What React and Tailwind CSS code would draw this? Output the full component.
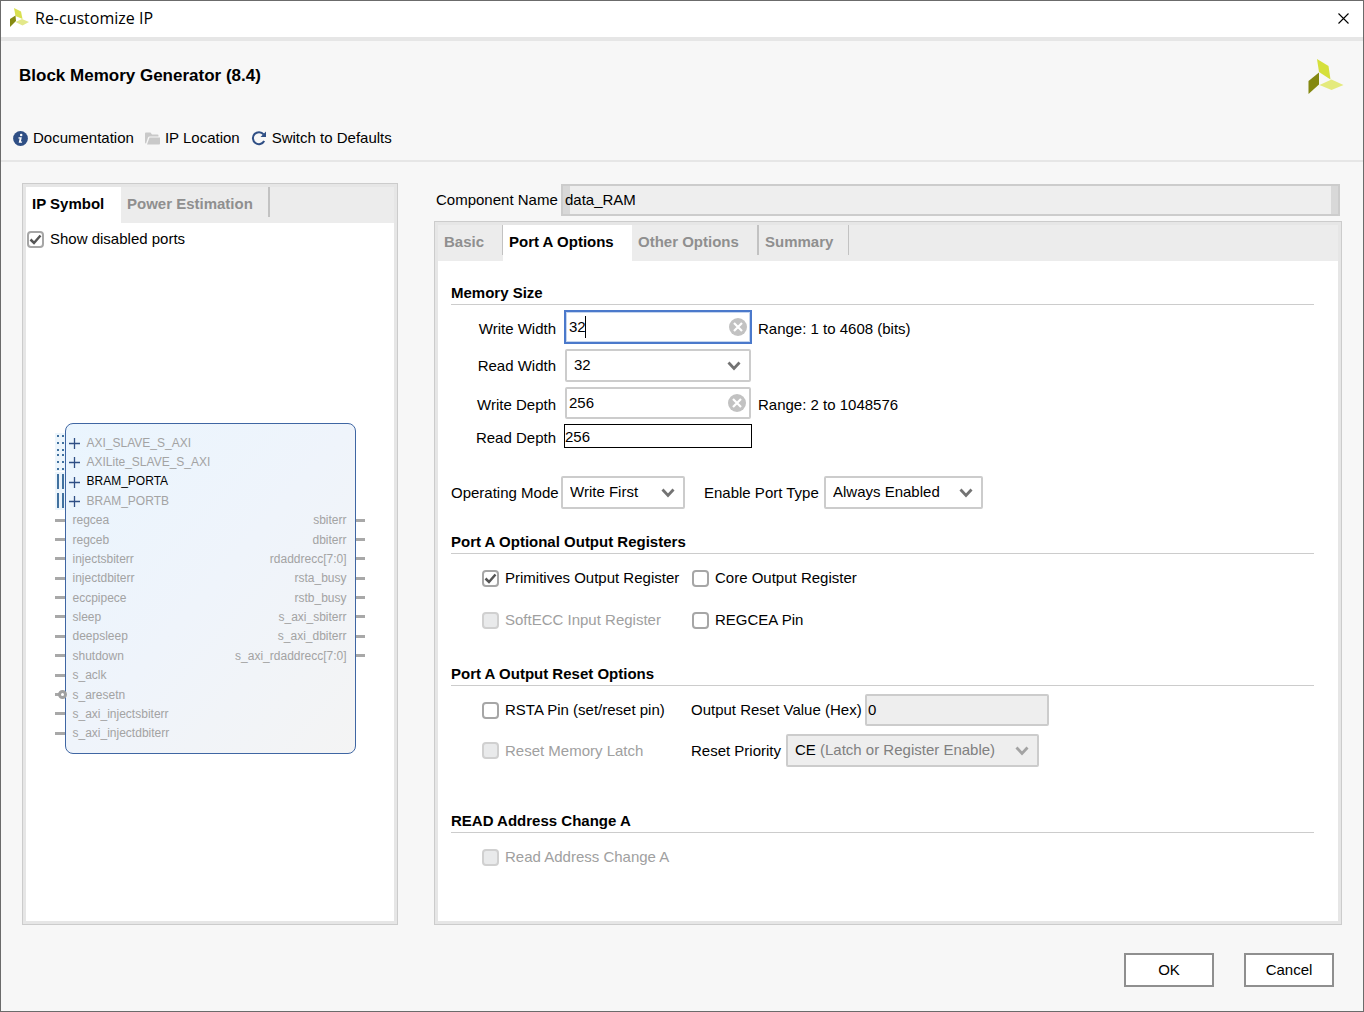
import React from "react";

const leftPorts = [
  { name: "AXI_SLAVE_S_AXI", kind: "axi" },
  { name: "AXILite_SLAVE_S_AXI", kind: "axi" },
  { name: "BRAM_PORTA", kind: "bram", active: true },
  { name: "BRAM_PORTB", kind: "bram" },
  { name: "regcea", out: "sbiterr" },
  { name: "regceb", out: "dbiterr" },
  { name: "injectsbiterr", out: "rdaddrecc[7:0]" },
  { name: "injectdbiterr", out: "rsta_busy" },
  { name: "eccpipece", out: "rstb_busy" },
  { name: "sleep", out: "s_axi_sbiterr" },
  { name: "deepsleep", out: "s_axi_dbiterr" },
  { name: "shutdown", out: "s_axi_rdaddrecc[7:0]" },
  { name: "s_aclk" },
  { name: "s_aresetn", kind: "inverted" },
  { name: "s_axi_injectsbiterr" },
  { name: "s_axi_injectdbiterr" },
];

function Logo({ className }) {
  return (
    <svg className={className} viewBox="0 0 36 36" aria-hidden="true">
      <path d="M9 0 L20.500 7 L22.500 20.500 L11 13Z" fill="#d5e03c" />
      <path d="M11 13.500 L11 25.500 L0.500 35 L0.500 22Z" fill="#848810" />
      <path d="M11.500 26 L23.500 20.500 L35.500 26 L23.500 31Z" fill="#e4ea7c" />
    </svg>
  );
}

function SmallLogo() {
  return (
    <svg className="size-[20px]" viewBox="0 0 20 20" aria-hidden="true">
      <path d="M5 0L12 3.500L13.500 11L6.500 8Z" fill="#d9e04f" />
      <path d="M6.500 7.500L7 13L1 19V11Z" fill="#868a12" />
      <path d="M6.500 14L13 11L20 14L13.500 17.500Z" fill="#e3e88a" />
    </svg>
  );
}

function InfoIcon() {
  return (
    <svg className="size-[15px]" viewBox="0 0 15 15" aria-hidden="true">
      <circle cx="7.500" cy="7.500" r="7.400" fill="#2f4f85" />
      <circle cx="8.200" cy="4" r="1.250" fill="#fff" />
      <path d="M5.600 6.200h3.200L7.900 10.500h1.300l-.3 1.200H5.700L6.600 7.400H5.300z" fill="#fff" />
    </svg>
  );
}

function FolderIcon() {
  return (
    <svg className="size-[15px]" viewBox="0 0 15 15" aria-hidden="true">
      <path d="M0 2.500Q0 1.500 1 1.500H5.500L7 3.500H12.500Q13.500 3.500 13.500 4.500V5.500H4.500Q3.500 5.500 3 6.500L1 12.500Q0 12.500 0 11.500Z" fill="#c9c9c9" />
      <path d="M4.500 6.500H15V12.500Q15 13.500 14 13.500H2Z" fill="#c9c9c9" />
    </svg>
  );
}

function RefreshIcon() {
  return (
    <svg className="size-[16px]" viewBox="0 0 16 16" aria-hidden="true">
      <path d="M12.600 4.400A6 6 0 1 0 13.200 11" fill="none" stroke="#2f4f85" strokeWidth="2" />
      <path d="M15 1.500V7H9.500Z" fill="#2f4f85" />
    </svg>
  );
}

function Chevron({ dim }) {
  return (
    <svg className="pointer-events-none absolute right-[10px] top-[12px] h-[10px] w-[14px]" viewBox="0 0 14 10" aria-hidden="true">
      <path d="M1.500 1.500L7 7.500L12.500 1.500" fill="none" stroke={dim ? "#a3a3a3" : "#737373"} strokeWidth="2.800" />
    </svg>
  );
}

function Dropdown({ id, value, className, disabled, hint }) {
  return (
    <div className={"relative h-[33px] " + className}>
      <select
        id={id}
        disabled={disabled}
        className="h-full w-full appearance-none rounded-[2px] border-2 border-[#cccccc] bg-white pb-0.5 pl-[7px] text-black opacity-100 outline-none disabled:bg-[#eeeeee]"
      >
        <option>{value}</option>
      </select>
      {hint && <span className="pointer-events-none absolute left-[34px] top-[6px] whitespace-nowrap leading-5 text-[#808080]">{hint}</span>}
      <Chevron dim={disabled} />
    </div>
  );
}

function ClearableInput({ id, value, focused }) {
  return (
    <div className={focused ? "relative h-[34px]" : "relative mx-px h-8"}>
      <input
        id={id}
        defaultValue={value}
        className={
          focused
            ? "h-full w-full border-2 border-[#4b79cb] bg-white pb-0.5 pl-[3px] shadow-[inset_0_0_0_1px_#c5d5ee] outline-none"
            : "h-full w-full rounded-[2px] border-2 border-[#cccccc] bg-white pb-0.5 pl-[2px] outline-none"
        }
      />
      {focused && <span className="absolute left-[21px] top-[6px] h-[22px] w-px bg-black" />}
      <button type="button" aria-label="Clear" className="absolute right-[5px] top-1/2 -translate-y-1/2">
        <svg className="size-[18px]" viewBox="0 0 18 18" aria-hidden="true">
          <circle cx="9" cy="9" r="9" fill="#c2c2c2" />
          <path d="M5 5L13 13M13 5L5 13" stroke="#fff" strokeWidth="2.200" />
        </svg>
      </button>
    </div>
  );
}

function Check({ label, checked, disabled }) {
  return (
    <label className={"flex items-center gap-1.5 whitespace-nowrap " + (disabled ? "text-[#a0a0a0]" : "text-black")}>
      <span className="relative flex size-[17px] shrink-0">
        <input
          type="checkbox"
          defaultChecked={checked}
          disabled={disabled}
          className="peer size-full appearance-none rounded-[4px] border-2 border-[#a6a6a6] bg-white disabled:border-[#d0d0d0] disabled:bg-[#e9eaeb]"
        />
        <svg className="pointer-events-none absolute inset-0 hidden size-full peer-checked:block" viewBox="0 0 17 17" aria-hidden="true">
          <path d="M3.500 8.500L7 12L13.500 4.500" fill="none" stroke="#555" strokeWidth="2.500" />
        </svg>
      </span>
      <span className="leading-5">{label}</span>
    </label>
  );
}

function SectionTitle({ children, className = "" }) {
  return <h2 className={"h-[22px] border-b border-[#cccccc] font-bold leading-5 " + className}>{children}</h2>;
}

function Tab({ children, active, className = "" }) {
  return (
    <button
      type="button"
      role="tab"
      aria-selected={!!active}
      className={"whitespace-nowrap pl-1.5 text-left font-bold " + (active ? "h-9 bg-white pb-0.5 text-black " : "h-[30px] pt-1 text-[#8f8f8f] ") + className}
    >
      {children}
    </button>
  );
}

function PortPin({ kind }) {
  if (kind === "axi" || kind === "bram") {
    return (
      <svg className="absolute -left-[11px] top-0 h-[19px] w-[26px]" viewBox="0 0 26 19" aria-hidden="true">
        <rect width="10" height="19" fill="#ecf5fc" />
        <path
          d={kind === "axi" ? "M3 2v16M8 2v16" : "M3 2v15M8 2v15"}
          stroke="#41719f"
          strokeWidth="2"
          strokeDasharray={kind === "axi" ? "2 5" : undefined}
        />
        <path d="M19.500 5v11M14 10.500h11" stroke="#2f4f85" strokeWidth="1.300" />
      </svg>
    );
  }
  return (
    <>
      <span className="absolute -left-[11px] top-[8px] h-[3px] w-2.5 bg-[#a8a8a8]" />
      {kind === "inverted" && <span className="absolute -left-[8px] top-[5px] size-[9px] rounded-full border-[3px] border-[#a0a0a0] bg-white" />}
    </>
  );
}

function SymbolDiagram() {
  return (
    <ul className="mx-auto mt-[168px] grid h-[331px] w-[291px] grid-rows-[repeat(16,1fr)] rounded-[8px] border border-[#3f66a3] bg-linear-to-br from-[#eaf5fe] via-[#eff4fb] to-[#f4f4f4] pb-2.5 pt-[9px] text-[12px] text-[#a3a3a3]">
      {leftPorts.map((p) => (
        <li key={p.name} className="relative flex items-center justify-between leading-[18px]">
          <PortPin kind={p.kind} />
          <span className={(p.kind === "axi" || p.kind === "bram" ? "pl-[21px] " : "pl-[7px] ") + (p.active ? "text-black" : "")}>{p.name}</span>
          {p.out && (
            <>
              <span className="pr-2">{p.out}</span>
              <span className="absolute -right-[10px] top-[8px] h-[3px] w-[9px] bg-[#a8a8a8]" />
            </>
          )}
        </li>
      ))}
    </ul>
  );
}

export default function App() {
  return (
    <div className="flex min-h-screen flex-col border border-[#6b6b6b] bg-[#f7f7f7] font-['Liberation_Sans',Arial,sans-serif] text-[15px] leading-5 text-black">
      <div className="flex h-10 items-center justify-between border-b-4 border-[#e6e6e6] bg-white pb-0.5 pl-2 pr-2.5">
        <div className="flex items-center gap-1.5">
          <SmallLogo />
          <span className="font-['Open_Sans','Noto_Sans',sans-serif] text-[16px]">Re-customize IP</span>
        </div>
        <button type="button" aria-label="Close" className="p-1">
          <svg className="size-[11px]" viewBox="0 0 11 11" aria-hidden="true">
            <path d="M.5.5l10 10M10.500.5l-10 10" stroke="#000" strokeWidth="1.100" />
          </svg>
        </button>
      </div>

      <header className="border-b-2 border-[#e6e6e6] pb-3">
        <div className="flex items-start justify-between pl-[18px] pr-[19px] pt-[18px]">
          <h1 className="pt-[7px] text-[17px] font-bold leading-5">Block Memory Generator (8.4)</h1>
          <Logo className="size-[36px]" />
        </div>
        <div className="mt-[33px] flex gap-[11px] pl-3">
          <button type="button" className="flex items-center gap-[5px]"><InfoIcon />Documentation</button>
          <button type="button" className="flex items-center gap-[5px]"><FolderIcon />IP Location</button>
          <button type="button" className="flex items-center gap-[5px]"><RefreshIcon />Switch to Defaults</button>
        </div>
      </header>

      <main className="flex flex-1 gap-9 px-[21px] pt-[21px]">
        <section className="w-[376px] shrink-0 border border-[#cccccc] bg-[#e6e6e6] p-[3px]">
          <div className="h-full bg-white">
            <div role="tablist" className="flex h-9 bg-[#ececec]">
              <Tab active className="w-[95px]">IP Symbol</Tab>
              <Tab className="w-[149px] border-r-2 border-[#c2c2c2]">Power Estimation</Tab>
            </div>
            <div className="flex h-8 items-center pl-px">
              <Check label="Show disabled ports" checked />
            </div>
            <SymbolDiagram />
          </div>
        </section>

        <div className="flex min-w-0 flex-1 flex-col">
          <div className="flex h-[38px] items-start px-0.5 pt-px">
            <label htmlFor="component" className="w-[125px] shrink-0 whitespace-nowrap pt-1.5">Component Name</label>
            <input
              id="component"
              readOnly
              defaultValue="data_RAM"
              className="h-8 min-w-0 flex-1 border-2 border-[#cccccc] bg-[#eeeeee] pb-0.5 pl-0.5 shadow-[inset_7px_0_0_#d8d8d8,inset_-7px_0_0_#d8d8d8] outline-none"
            />
          </div>

          <section className="flex-1 border border-[#cccccc] bg-[#e6e6e6] p-[3px]">
            <div className="h-full bg-white pb-10">
              <div role="tablist" className="flex h-9 bg-[#ececec]">
                <Tab className="w-[65px] border-r border-[#c2c2c2]">Basic</Tab>
                <Tab active className="w-[129px]">Port A Options</Tab>
                <Tab className="w-[127px] border-r-2 border-[#c2c2c2]">Other Options</Tab>
                <Tab className="w-[90px] border-r border-[#c2c2c2]">Summary</Tab>
              </div>

              <div className="pl-[13px] pr-6 pt-[22px]">
                <SectionTitle>Memory Size</SectionTitle>
                <div className="grid grid-cols-[113px_188px_auto] items-center gap-y-[5px] pt-[5px]">
                  <label htmlFor="ww" className="pr-2 pt-1 text-right">Write Width</label>
                  <ClearableInput id="ww" value="32" focused />
                  <span className="pl-1.5 pt-1">Range: 1 to 4608 (bits)</span>

                  <label htmlFor="rw" className="pr-2 text-right">Read Width</label>
                  <Dropdown id="rw" value="32" className="mx-px" />
                  <span />

                  <label htmlFor="wd" className="pr-2 pt-1 text-right">Write Depth</label>
                  <ClearableInput id="wd" value="256" />
                  <span className="pl-1.5 pt-1">Range: 2 to 1048576</span>

                  <label htmlFor="rd" className="pr-2 pt-1 text-right">Read Depth</label>
                  <input id="rd" readOnly defaultValue="256" className="h-6 w-full border border-black bg-white outline-none" />
                  <span />
                </div>

                <div className="mt-7 flex items-center">
                  <label htmlFor="om" className="w-[110px] whitespace-nowrap">Operating Mode</label>
                  <Dropdown id="om" value="Write First" className="w-[124px]" />
                  <label htmlFor="ep" className="ml-[19px] w-[120px] whitespace-nowrap">Enable Port Type</label>
                  <Dropdown id="ep" value="Always Enabled" className="w-[159px]" />
                </div>

                <SectionTitle className="mt-[23px]">Port A Optional Output Registers</SectionTitle>
                <div className="grid auto-rows-[42px] grid-cols-[210px_auto] items-center pl-[31px] pt-[3px]">
                  <Check label="Primitives Output Register" checked />
                  <Check label="Core Output Register" />
                  <Check label="SoftECC Input Register" disabled />
                  <Check label="REGCEA Pin" />
                </div>

                <SectionTitle className="mt-[23px]">Port A Output Reset Options</SectionTitle>
                <div className="grid grid-cols-[209px_auto] items-center gap-y-2 pl-[31px] pt-2">
                  <Check label="RSTA Pin (set/reset pin)" />
                  <div className="flex items-center">
                    <label htmlFor="orv" className="w-[174px] whitespace-nowrap">Output Reset Value (Hex)</label>
                    <input id="orv" disabled defaultValue="0" className="h-8 w-[184px] rounded-[2px] border-2 border-[#cccccc] bg-[#eeeeee] pb-0.5 pl-px" />
                  </div>
                  <Check label="Reset Memory Latch" disabled />
                  <div className="flex items-center">
                    <label htmlFor="rp" className="w-[95px] whitespace-nowrap">Reset Priority</label>
                    <Dropdown id="rp" value="CE" hint="(Latch or Register Enable)" disabled className="w-[253px]" />
                  </div>
                </div>

                <SectionTitle className="mt-11">READ Address Change A</SectionTitle>
                <div className="grid auto-rows-[42px] items-center pl-[31px] pt-[3px]">
                  <Check label="Read Address Change A" disabled />
                </div>
              </div>
            </div>
          </section>
        </div>
      </main>

      <footer className="flex justify-end gap-[30px] pb-6 pr-[29px] pt-7">
        <button type="button" className="h-[34px] w-[90px] border-2 border-[#8f8f8f] bg-white">OK</button>
        <button type="button" className="h-[34px] w-[90px] border-2 border-[#8f8f8f] bg-white">Cancel</button>
      </footer>
    </div>
  );
}
